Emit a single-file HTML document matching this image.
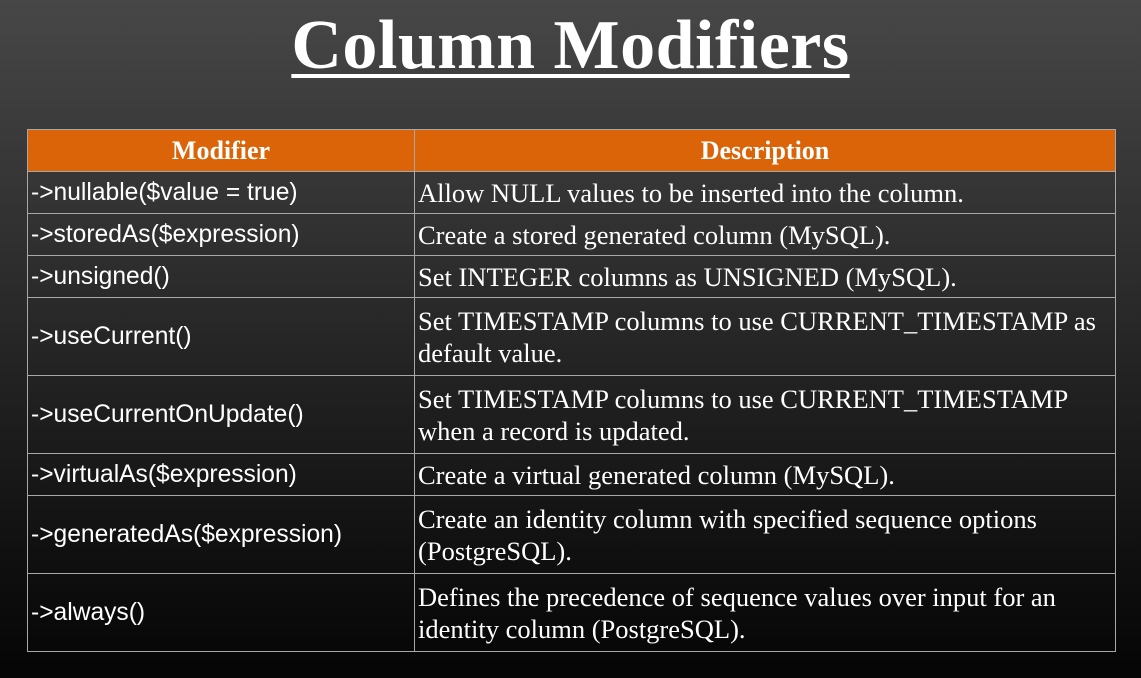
<!DOCTYPE html>
<html><head><meta charset="utf-8"><style>
html,body{margin:0;padding:0;}
body{width:1141px;height:678px;overflow:hidden;background:linear-gradient(#474747 0%,#3a3a3a 20%,#262626 50%,#111 80%,#050505 100%);position:relative;}
h1{position:absolute;left:0;top:4px;width:1141px;margin:0;text-align:center;font-family:"Liberation Serif",serif;font-weight:bold;font-size:70px;color:#fff;line-height:84px;text-decoration:underline;text-decoration-thickness:4px;text-underline-offset:6px;letter-spacing:0.5px;}
table{position:absolute;left:27px;top:129px;border-collapse:collapse;width:1089px;}
td,th{border:1.5px solid #a8a8a8;color:#fff;padding:0 0 0 3px;vertical-align:middle;white-space:nowrap;}
th{background:#dc6408;font-family:"Liberation Serif",serif;font-weight:bold;font-size:26px;height:41px;text-align:center;padding:0;}
td.m{font-family:"Liberation Sans",sans-serif;font-size:24.6px;width:383px;}
td.d{font-family:"Liberation Serif",serif;font-size:26.5px;line-height:32px;}
tr.s td{height:41px;}
tr.t td{height:77px;}
</style></head><body>
<h1>Column Modifiers</h1>
<table>
<tr><th>Modifier</th><th>Description</th></tr>
<tr class="s"><td class="m">-&gt;nullable($value = true)</td><td class="d">Allow NULL values to be inserted into the column.</td></tr>
<tr class="s"><td class="m">-&gt;storedAs($expression)</td><td class="d">Create a stored generated column (MySQL).</td></tr>
<tr class="s"><td class="m">-&gt;unsigned()</td><td class="d">Set INTEGER columns as UNSIGNED (MySQL).</td></tr>
<tr class="t"><td class="m">-&gt;useCurrent()</td><td class="d">Set TIMESTAMP columns to use CURRENT_TIMESTAMP as<br>default value.</td></tr>
<tr class="t"><td class="m">-&gt;useCurrentOnUpdate()</td><td class="d">Set TIMESTAMP columns to use CURRENT_TIMESTAMP<br>when a record is updated.</td></tr>
<tr class="s"><td class="m">-&gt;virtualAs($expression)</td><td class="d">Create a virtual generated column (MySQL).</td></tr>
<tr class="t"><td class="m">-&gt;generatedAs($expression)</td><td class="d">Create an identity column with specified sequence options<br>(PostgreSQL).</td></tr>
<tr class="t"><td class="m">-&gt;always()</td><td class="d">Defines the precedence of sequence values over input for an<br>identity column (PostgreSQL).</td></tr>
</table>
</body></html>
